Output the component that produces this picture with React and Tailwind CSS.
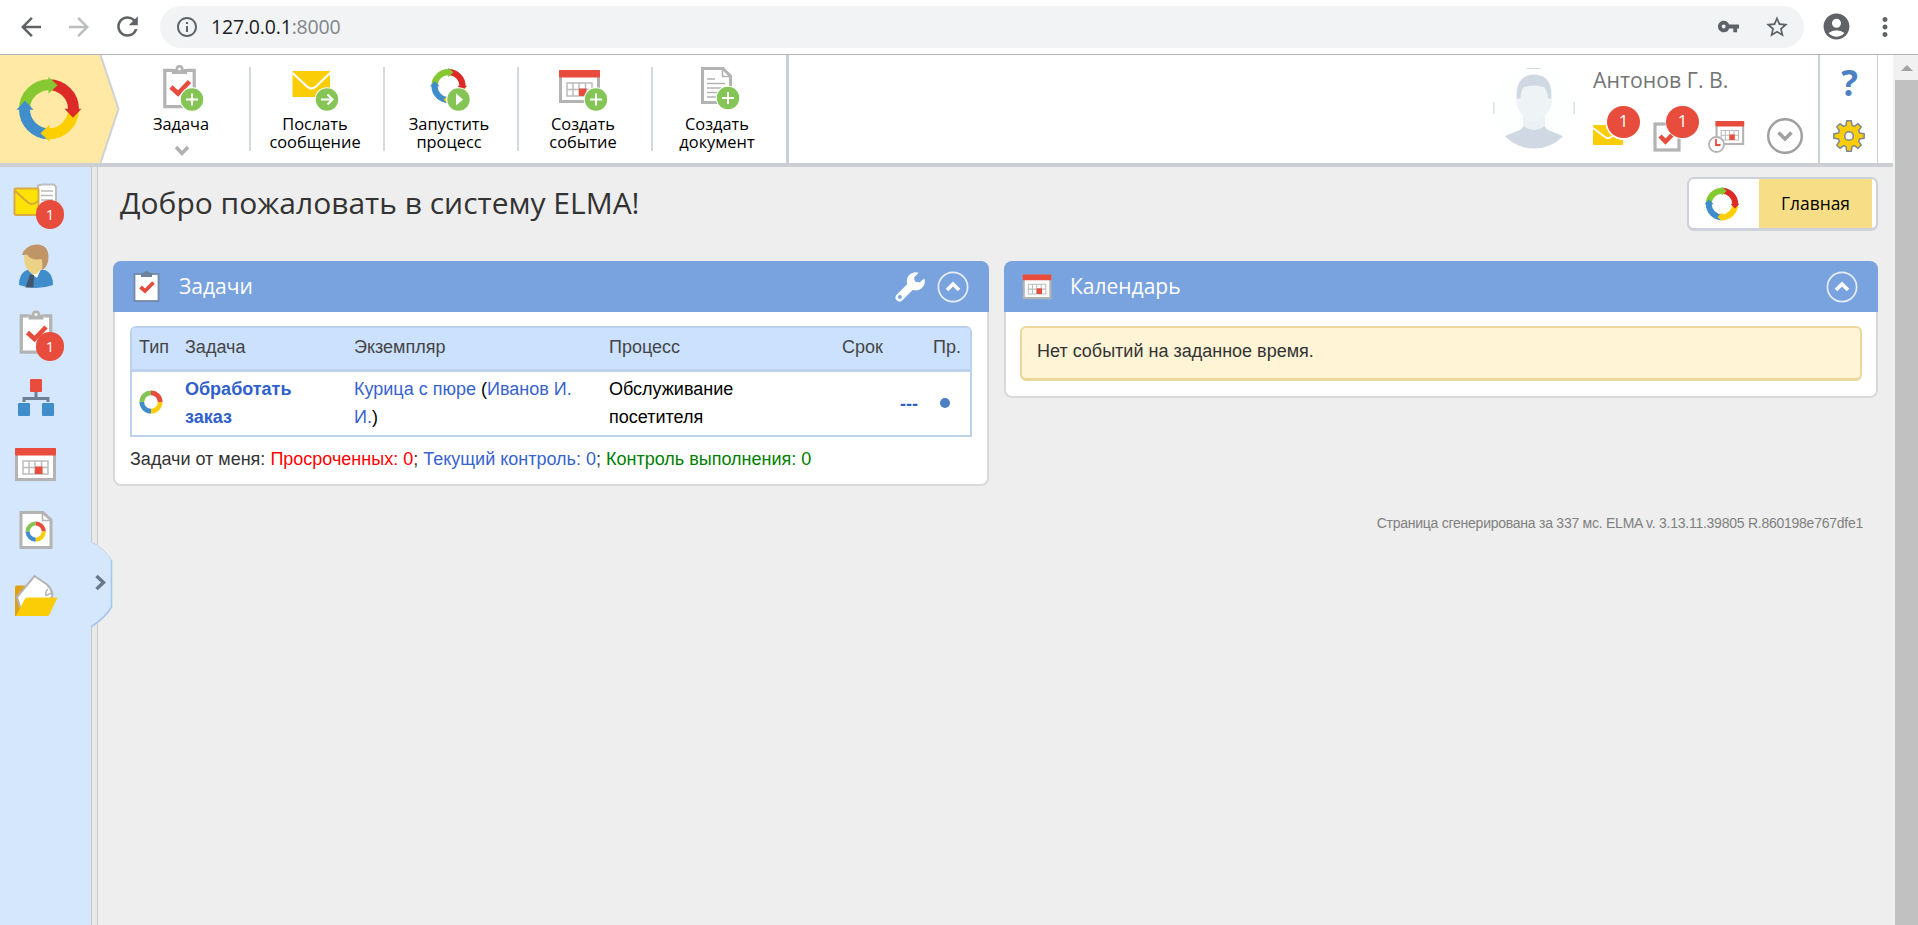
import React from "react";
import { MdArrowBack, MdArrowForward, MdRefresh, MdInfoOutline, MdVpnKey, MdStarBorder, MdAccountCircle, MdMoreVert } from "react-icons/md";

const GREEN = "#84c556";
const RED = "#e84c3d";
const YELLOW = "#fbcd06";
const BLUE = "#3f8dca";
const GRAY = "#b3b3b3";

/* Four-colour cycle of arrows, centred on (0, 0), outer radius 30 */
function Cycle({ transform, parts = ["#86c832", "#dc2b27", "#fdcf00", "#3f8dca"] }) {
  return (
    <g transform={transform}>
      {parts.map((c, i) => (
        <path key={i} d="M-24.500 0A24.500 24.500 0 0 1 0 -24.500" fill="none" stroke={c} strokeWidth="11" transform={`rotate(${i * 90})`} />
      ))}
      {parts.map((c, i) => (
        <path key={i} d="M-0.500 -32.500V-15.500L8.500 -24Z" fill={c} transform={`rotate(${i * 90})`} />
      ))}
    </g>
  );
}

function Ring({ transform }) {
  return (
    <g transform={transform} fill="none" strokeWidth="4.6">
      {[GREEN, RED, YELLOW, BLUE].map((c, i) => (
        <path key={c} d="M-9 0A9 9 0 0 1 0 -9" stroke={c} transform={`rotate(${i * 90})`} />
      ))}
    </g>
  );
}

function Plus({ x, y, kind = "plus" }) {
  return (
    <g transform={`translate(${x} ${y})`}>
      <circle r="12.3" fill="#fff" />
      <circle r="11.2" fill={GREEN} />
      {kind === "plus" && <path d="M-6 0H6M0 -6V6" stroke="#fff" strokeWidth="2" />}
      {kind === "arrow" && <path d="M-6 0H5M0.5 -5L5.5 0L0.5 5" stroke="#fff" strokeWidth="2.2" fill="none" />}
      {kind === "play" && <path d="M-2.5 -6L4.5 0L-2.5 6Z" fill="#fff" />}
    </g>
  );
}

function Clipboard({ transform, frame = GRAY, fill = "#fff" }) {
  return (
    <g transform={transform}>
      <path d="M9 1.8H1.8V38.2H31.2V1.8H24" fill={fill} stroke={frame} strokeWidth="3.2" />
      <path d="M9 5.5V0.5H12.5A4 4 0 0 1 20.5 0.5H24V5.5Z" fill={frame} />
      <circle cx="16.5" cy="0.6" r="1.4" fill="#fff" />
      <path d="M8 18.5L15 25L26.5 13" fill="none" stroke={RED} strokeWidth="4.6" />
    </g>
  );
}

/* 41 x 33 calendar sheet */
function Calendar({ transform }) {
  return (
    <g transform={transform}>
      <rect x="1.5" y="1.5" width="38" height="30" fill="#fff" stroke={GRAY} strokeWidth="3" />
      <rect width="41" height="7.5" rx="1" fill={RED} />
      <path d="M8 13H33V26H8ZM8 19.5H33M14 13V26M20 13V26M26.5 13V26" fill="none" stroke="#bcbcbc" strokeWidth="1.5" />
      <rect x="20" y="18.5" width="7.5" height="7.5" fill={RED} />
    </g>
  );
}

const toolbar = [
  {
    label: ["Задача"],
    more: true,
    icon: (
      <>
        <Clipboard transform="translate(12 6.5)" />
        <Plus x={41} y={37.500} />
      </>
    ),
  },
  {
    label: ["Послать", "сообщение"],
    icon: (
      <>
        <rect x="7.5" y="9" width="37.5" height="26" fill={YELLOW} />
        <path d="M7.5 11L22 24.5Q26.5 28.500 31 24.500L45 11" fill="none" stroke="#fff" strokeWidth="2.2" />
        <Plus x={42} y={37.500} kind="arrow" />
      </>
    ),
  },
  {
    label: ["Запустить", "процесс"],
    icon: (
      <>
        <Cycle transform="translate(29.5 24) scale(.57)" />
        <Plus x={39.5} y={37.500} kind="play" />
      </>
    ),
  },
  {
    label: ["Создать", "событие"],
    icon: (
      <>
        <Calendar transform="translate(6 8)" />
        <Plus x={43} y={37.500} />
      </>
    ),
  },
  {
    label: ["Создать", "документ"],
    icon: (
      <>
        <path d="M15.500 6.500H36L43.500 14V40.500H15.500Z" fill="#fff" stroke={GRAY} strokeWidth="3" />
        <path d="M35.500 6V14.500H44" fill="none" stroke={GRAY} strokeWidth="1.600" />
        <path d="M20 17H28M20 21.500H38M20 26H34M20 30.500H34M20 35H30" stroke={GRAY} strokeWidth="1.600" />
        <Plus x={41} y={36} />
      </>
    ),
  },
];

const sidebar = [
  {
    badge: true,
    icon: (
      <>
        <path d="M38 18.500L42 17.500H54L56 20V47H38Z" fill="#fff" stroke="#bdbdbd" strokeWidth="2" />
        <path d="M41 24H53M41 28.500H53M41 33H53" stroke="#bbb" strokeWidth="1.600" />
        <rect x="14.500" y="21.500" width="24" height="26.500" rx="1.500" fill="#fde205" stroke="#d8ab48" strokeWidth="2" />
        <path d="M15 24L28 35.500Q31.500 38.500 36 35.500L38 34" fill="none" stroke="#d8a838" strokeWidth="2" />
      </>
    ),
  },
  {
    icon: (
      <>
        <path d="M19 52Q19 40 27 37H45Q53 40 53 52Q36 58 19 52Z" fill={BLUE} />
        <path d="M28 36L33 42L37 45L41 36Z" fill="#fff" />
        <path d="M29.500 41.500L34 42L33.500 54.500H25.500L29 45Z" fill="#42566b" />
        <path d="M24 23Q24 38 34 41.500Q45 38 47 20L30 18Z" fill="#ecd287" />
        <path d="M22 22Q25 12 37 11.500Q48.500 12 48.500 24Q48.500 33 42 37.500Q43 31 41.500 26Q31 28 27 21.500Q24 22 22 22Z" fill="#bf9568" />
      </>
    ),
  },
  { badge: true, icon: <Clipboard transform="translate(19.500 15)" /> },
  {
    icon: (
      <>
        <rect x="30" y="14" width="12" height="13" rx="1" fill={RED} />
        <path d="M36 27V33M24 37V33.500H48V37" fill="none" stroke="#6f8197" strokeWidth="3" />
        <rect x="18" y="38" width="12" height="13" rx="1" fill={BLUE} />
        <rect x="42" y="38" width="12" height="13" rx="1" fill={BLUE} />
      </>
    ),
  },
  { icon: <Calendar transform="translate(15 17)" /> },
  {
    icon: (
      <>
        <path d="M21 15.500H43L51 23V50.500H21Z" fill="#fff" stroke={GRAY} strokeWidth="3" />
        <path d="M42.500 15V23.500H51" fill="none" stroke={GRAY} strokeWidth="1.600" />
        <Ring transform="translate(35.700 34.600) scale(.9)" />
      </>
    ),
  },
  {
    icon: (
      <>
        <path d="M15 27V24.500Q15 22.500 17 22.500H25V53H15Z" fill="#e0a210" />
        <path d="M17 34L34.500 13L47 21.500Q51 25 52.500 31L48 48L20 44Z" fill="#fff" stroke={GRAY} strokeWidth="2" />
        <path d="M52 30L46 32.500Q45 29 48 26" fill="none" stroke={GRAY} strokeWidth="1.500" />
        <path d="M16 53L24.500 36.500Q25.500 34.500 28 34.500H57.500L49.500 51.500Q49 53 47 53Z" fill={YELLOW} />
      </>
    ),
  },
];

function gearPath() {
  const pts = [];
  for (let i = 0; i < 8; i++) {
    const a = (i * Math.PI) / 4 - Math.PI / 2;
    [[-0.28, 11], [-0.15, 15.3], [0.15, 15.3], [0.28, 11]].forEach(([d, r]) =>
      pts.push(`${(r * Math.cos(a + d)).toFixed(2)} ${(r * Math.sin(a + d)).toFixed(2)}`)
    );
  }
  return `M${pts.join("L")}Z`;
}

function BrowserBar() {
  return (
    <div className="flex h-[55px] shrink-0 items-center border-b border-[#b4b4b6] bg-white pb-[1px] text-[#5f6368]">
      <MdArrowBack className="ml-[16px] size-[30px]" />
      <MdArrowForward className="ml-[18px] size-[30px] text-[#bbbdbf]" />
      <MdRefresh className="ml-[18px] size-[31px]" />
      <div className="ml-[17px] flex h-[42px] w-[1644px] items-center rounded-full bg-[#f1f3f4]">
        <MdInfoOutline className="ml-[15px] size-[24px]" />
        <span className="ml-[12px] font-['Open_Sans',sans-serif] text-[19.5px] tracking-[-0.18px] text-[#202124]">
          127.0.0.1<span className="text-[#80868b]">:8000</span>
        </span>
        <MdVpnKey className="ml-auto size-[23px]" />
        <MdStarBorder className="mr-[14px] ml-[24px] size-[26px]" />
      </div>
      <MdAccountCircle className="ml-[17px] size-[31px]" />
      <MdMoreVert className="ml-[18px] size-[30px]" />
    </div>
  );
}

function HeaderBadge({ className }) {
  return (
    <span className={`absolute flex h-[32px] w-[33px] items-center justify-center rounded-full bg-[#e84c3d] pb-[2px] font-['Open_Sans',sans-serif] text-[17px] text-white ${className}`}>1</span>
  );
}

function Header() {
  return (
    <header className="flex h-[112px] shrink-0 border-b-4 border-[#cbcfd3] bg-white font-['Open_Sans','Noto_Sans',sans-serif]">
      <svg className="h-[108px] w-[120px]" viewBox="0 0 120 108">
        <path d="M0 0H100L119 54L100 108H0Z" fill="#ffe9a4" />
        <path d="M100.500 0L118.500 54L100.500 108" fill="none" stroke="#cfd1d4" strokeWidth="2" />
        <Cycle transform="translate(49 54.300)" />
      </svg>
      <div className="-ml-[3px] flex">
        {toolbar.map(({ label, icon, more }, i) => (
          <div key={i} className="relative flex w-[134px] flex-col items-center pt-[7px] pr-[6px]">
            <svg className="h-[52px] w-[60px] shrink-0" viewBox="0 0 60 52">{icon}</svg>
            <div className="mt-[1px] text-center text-[16.4px] leading-[18px] text-black">
              {label.map((l) => (
                <div key={l}>{l}</div>
              ))}
            </div>
            {more && (
              <svg className="mt-[12px] ml-[2px] h-[12px] w-[16px]" viewBox="0 0 16 12">
                <path d="M2 2L8 8.500L14 2" fill="none" stroke="#b0b0b0" strokeWidth="3.500" />
              </svg>
            )}
            {i < 4 && <span className="absolute top-[12px] right-0 h-[84px] w-[2px] bg-[#d6dade]" />}
          </div>
        ))}
      </div>
      <div className="-ml-[1px] w-[3px] bg-[#cbcfd6]" />
      <div className="ml-auto flex">
        <svg className="mt-[12px] h-[82px] w-[82px]" viewBox="0 0 82 82">
          <clipPath id="av"><circle cx="41" cy="41" r="40.500" /></clipPath>
          <g clipPath="url(#av)">
            <rect width="82" height="82" fill="#fdfefe" />
            <path d="M0 82Q6 70 22 65Q31 62 31 57H51Q51 62 60 65Q76 70 82 82Z" fill="#d0d9e3" />
            <path d="M30 50H52V59Q41 67 30 59Z" fill="#eaf0f4" />
            <path d="M23 30Q22 10 41 8.500Q60 10 59 30Q59 42 52 49Q41 61 30 49Q23 42 23 30Z" fill="#eef3f6" />
            <path d="M24 32Q22 8 41 7.500Q60 8 58 32L55 31Q54 23 51 20Q41 17 31 20Q28 23 27.500 31Z" fill="#d0d9e3" />
            <path d="M33 53Q41 60 49 53L46 55Q41 58 36 55Z" fill="#dbe4ea" />
          </g>
          <path d="M34 1.500H48M0.800 35V47M81.200 35V47" stroke="#d6d8d9" strokeWidth="1.200" />
        </svg>
        <div className="ml-[18px]">
          <div className="mt-[10px] h-[39px] text-[21.3px] leading-[30px] text-[#757575]">Антонов Г. В.</div>
          <div className="flex h-[50px]">
            <div className="relative w-[60px]">
              <svg className="h-[50px] w-[60px]" viewBox="0 0 60 50">
                <rect y="21" width="30" height="20" rx="1" fill={YELLOW} />
                <path d="M0 24L12 33Q15 35.500 18 33L30 24" fill="none" stroke="#fff" strokeWidth="1.800" />
                <circle cx="30.500" cy="18" r="18" fill="#fff" />
              </svg>
              <HeaderBadge className="left-[14px] top-[2px]" />
            </div>
            <div className="relative w-[52px]">
              <svg className="h-[50px] w-[52px]" viewBox="0 0 52 50">
                <rect x="2" y="20" width="24" height="26" fill="#fff" stroke={GRAY} strokeWidth="3.200" />
                <path d="M7 32L12.500 37.500L19 31" fill="none" stroke={RED} strokeWidth="4.500" />
                <circle cx="29.500" cy="18" r="17" fill="#fff" />
              </svg>
              <HeaderBadge className="left-[13px] top-[2px]" />
            </div>
            <svg className="h-[50px] w-[60px]" viewBox="0 0 60 50">
              <Calendar transform="translate(10.500 17) scale(.7 .73)" />
              <circle cx="11.500" cy="40.500" r="7.500" fill="#fff" stroke={GRAY} strokeWidth="1.800" />
              <path d="M11 35V41H15.500" fill="none" stroke={RED} strokeWidth="1.800" />
            </svg>
            <svg className="h-[50px] w-[40px]" viewBox="0 0 40 50">
              <circle cx="20" cy="32" r="16.800" fill="none" stroke="#a0a0a0" strokeWidth="2.500" />
              <path d="M13.500 28.500L20 35L26.500 28.500" fill="none" stroke="#a0a0a0" strokeWidth="3.600" />
            </svg>
          </div>
        </div>
        <div className="mr-[15px] ml-[13px] flex w-[60px] flex-col items-center border-r border-l-2 border-[#cbcfd6]">
          <div className="mt-[3px] h-[54px] pl-[2px] font-['Open_Sans',sans-serif] text-[35px] leading-[50px] font-bold text-[#4c7fc4]">?</div>
          <svg className="mt-[7px] h-[34px] w-[34px]" viewBox="-17 -17 34 34">
            <path d={gearPath()} fill={YELLOW} stroke="#7b8790" strokeWidth="1.500" strokeLinejoin="round" />
            <circle r="4.300" fill="#fff" stroke="#7b8790" strokeWidth="1.500" />
          </svg>
        </div>
      </div>
    </header>
  );
}

function Sidebar() {
  return (
    <aside className="relative flex w-[98px] shrink-0 border-r border-[#c9c9c9] bg-[#e9e9e9]">
      <div className="w-[92px] border-r border-[#c5c9ce] bg-[#d5e7fd]">
        {sidebar.map(({ icon, badge }, i) => (
          <div key={i} className="relative h-[66px]">
            <svg className="h-[66px] w-[60px]" viewBox="0 0 60 66">{icon}</svg>
            {badge && (
              <span className="absolute top-[33px] left-[36px] flex h-[29px] w-[28px] items-center justify-center rounded-full bg-[#e84c3d] font-['Open_Sans',sans-serif] text-[15px] text-white">1</span>
            )}
          </div>
        ))}
      </div>
      <svg className="absolute top-[373px] left-[90px] h-[90px] w-[24px]" viewBox="0 0 24 90">
        <path d="M0 2H1Q13 7 21.500 20V67Q16 77 1 87H0Z" fill="#d5e7fd" />
        <path d="M1 2Q13 7 21.500 20" fill="none" stroke="#c3d5ea" strokeWidth="1" />
        <path d="M21.500 20V67Q16 77 1 87" fill="none" stroke="#a9c6e8" strokeWidth="1.600" />
        <path d="M6.500 36L13.500 42.500L6.500 49" fill="none" stroke="#66788e" strokeWidth="3.400" />
      </svg>
    </aside>
  );
}

function Collapse() {
  return (
    <svg className="size-[32px]" viewBox="0 0 32 32">
      <circle cx="16" cy="16" r="14.600" fill="none" stroke="#e6eefa" strokeWidth="1.700" />
      <path d="M10 19L16 13L22 19" fill="none" stroke="#fff" strokeWidth="3.600" />
    </svg>
  );
}

function Card({ width, icon, title, tools, children }) {
  return (
    <section className={width}>
      <div className="flex h-[51px] items-center rounded-t-[8px] bg-[#79a3df] pr-[20px] font-['Open_Sans','Noto_Sans',sans-serif] text-[21px] text-white">
        {icon}
        <span>{title}</span>
        <div className="ml-auto flex items-center gap-[12px]">
          {tools}
          <Collapse />
        </div>
      </div>
      <div className="rounded-b-[8px] border-2 border-t-0 border-[#d9d9d9] bg-white px-[15px] pt-[14px]">{children}</div>
    </section>
  );
}

const link = "text-[#3763cf]";

function TasksCard() {
  return (
    <Card
      width="w-[876px]"
      title="Задачи"
      icon={
        <svg className="mr-[19px] ml-[20px] h-[36px] w-[27px]" viewBox="0 0 27 36">
          <rect x="1.500" y="5" width="24" height="27" fill="#fff" stroke="#7389a8" strokeWidth="1.800" />
          <path d="M8 8V4H10A4 3.500 0 0 1 17 4H19V8Z" fill="#6f829c" />
          <path d="M7.500 18L12 22L20.500 13.500" fill="none" stroke={RED} strokeWidth="3.800" />
        </svg>
      }
      tools={
        <svg className="size-[30px]" viewBox="0 0 30 30">
          <path d="M4.600 25.400L17 13" stroke="#fff" strokeWidth="8" strokeLinecap="round" />
          <path d="M23.500 0.800A9 9 0 1 0 29.300 6.500L24.500 10.500L20 9.500L19 5.500Z" fill="#fff" />
          <circle cx="4.900" cy="25" r="1.900" fill="#79a3df" />
        </svg>
      }
    >
      <div className="overflow-hidden rounded-t-[6px] border-2 border-[#bcd1ec]">
        <div className="flex h-[44px] items-center border-b-3 border-[#bcd1ec] bg-[#cbe1fe] pb-[2px] text-[#454545]">
          <div className="w-[53px] pl-[7px]">Тип</div>
          <div className="w-[169px]">Задача</div>
          <div className="w-[255px]">Экземпляр</div>
          <div className="w-[233px]">Процесс</div>
          <div className="w-[91px]">Срок</div>
          <div>Пр.</div>
        </div>
        <div className="flex h-[63px] text-black">
          <svg className="mt-[18px] mr-[22px] ml-[7px] size-[24px]" viewBox="-12 -12 24 24"><Ring transform="scale(1.02)" /></svg>
          <div className="w-[169px] pt-[3px] pr-[40px] leading-[28px] font-bold text-[#2f5fcb]">Обработать заказ</div>
          <div className="w-[255px] pt-[3px] leading-[28px]">
            <span className={link}>Курица с пюре</span> (<span className={link}>Иванов И.<br />И.</span>)
          </div>
          <div className="w-[291px] pt-[3px] leading-[28px]">Обслуживание<br />посетителя</div>
          <div className="w-[40px] pt-[18px] leading-[28px] font-bold text-[#2f5fcb]">---</div>
          <span className="mt-[26px] size-[10px] rounded-full bg-[#4c80c5]" />
        </div>
      </div>
      <div className="h-[47px] pt-[8px] leading-[28px] whitespace-nowrap text-[#333]">
        Задачи от меня: <span className="text-[#ff0000]">Просроченных: 0</span>; <span className={link}>Текущий контроль: 0</span>; <span className="text-[#008000]">Контроль выполнения: 0</span>
      </div>
    </Card>
  );
}

function CalendarCard() {
  return (
    <Card
      width="w-[874px]"
      title="Календарь"
      icon={
        <svg className="mr-[18px] ml-[18px] h-[36px] w-[30px]" viewBox="0 0 30 36">
          <Calendar transform="translate(.7 5.500) scale(.7 .75)" />
        </svg>
      }
    >
      <div className="-mr-px -ml-px mb-[15px] flex h-[55px] items-center rounded-[6px] border-2 border-b-3 border-[#ead79b] bg-[#fff4d6] pb-[3px] pl-[15px] text-[#333]">
        Нет событий на заданное время.
      </div>
    </Card>
  );
}

export default function App() {
  return (
    <div className="flex h-[925px] w-[1918px] flex-col overflow-hidden bg-[#eee] font-['Liberation_Sans',Arial,sans-serif] text-[18px]">
      <BrowserBar />
      <div className="flex min-h-0 flex-1">
        <div className="flex w-[1893px] flex-col">
          <Header />
          <div className="flex min-h-0 flex-1">
            <Sidebar />
            <main className="flex-1 pr-[15px] pl-[15px]">
              <div className="flex h-[94px] justify-between pt-[10px] font-['Open_Sans','Noto_Sans',sans-serif]">
                <h1 className="pl-[7px] text-[30px] leading-[52px] text-[#333]">Добро пожаловать в систему ELMA!</h1>
                <div className="flex h-[54px] w-[191px] overflow-hidden rounded-[7px] border-2 border-b-3 border-[#cdd1d9] bg-white">
                  <svg className="h-[50px] w-[70px]" viewBox="0 0 70 50"><Cycle transform="translate(33 25) scale(.54)" /></svg>
                  <div className="-mt-[2px] -mb-[3px] h-[54px] w-[113px] border-b-3 border-[#dfc475] bg-[#f7dd85] text-center text-[17.4px] leading-[52px] text-black">Главная</div>
                </div>
              </div>
              <div className="flex items-start justify-between">
                <TasksCard />
                <CalendarCard />
              </div>
              <footer className="mt-[27px] pr-[15px] text-right text-[14px] leading-[20px] tracking-[-0.25px] text-[#808080]">
                Страница сгенерирована за 337 мс. ELMA v. 3.13.11.39805 R.860198e767dfe1
              </footer>
            </main>
          </div>
        </div>
        <div className="flex flex-1 flex-col bg-[#f1f1f1] pl-[2px]">
          <div className="flex h-[25px] items-center justify-center">
            <svg className="h-[6px] w-[12px]" viewBox="0 0 12 6"><path d="M0 6L6 0L12 6Z" fill="#a3a3a3" /></svg>
          </div>
          <div className="flex-1 bg-[#c1c1c1]" />
        </div>
      </div>
    </div>
  );
}
